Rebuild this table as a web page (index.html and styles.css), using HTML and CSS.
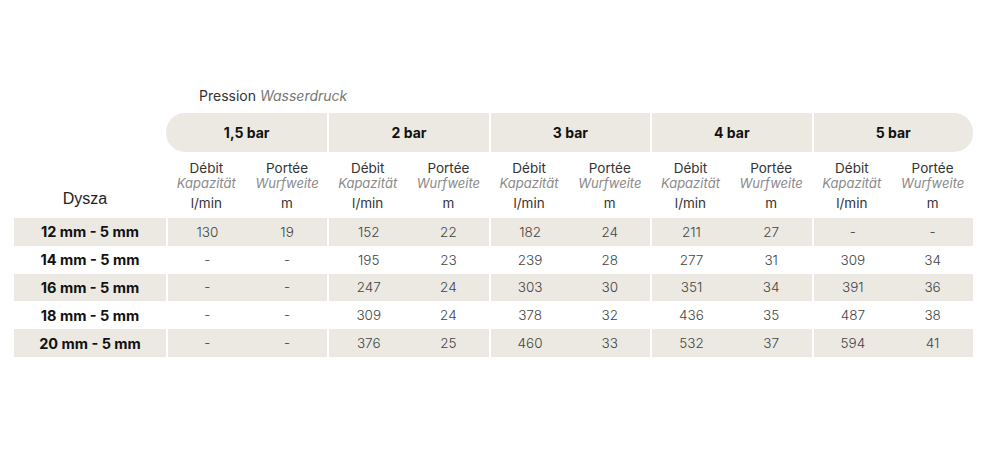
FILE: index.html
```html
<!DOCTYPE html>
<html lang="pl">
<head>
<meta charset="utf-8">
<title>Dysza</title>
<link rel="stylesheet" href="styles.css">
</head>
<body>
<div class="wrap">
  <div class="title">Pression <em>Wasserdruck</em></div>
  <table class="tbl">
    <colgroup>
      <col class="c-label">
      <col><col><col><col><col><col><col><col><col><col>
    </colgroup>
    <thead>
      <tr class="band">
        <th class="blank"></th>
        <th colspan="2" class="g first">1,5 bar</th>
        <th colspan="2" class="g">2 bar</th>
        <th colspan="2" class="g">3 bar</th>
        <th colspan="2" class="g">4 bar</th>
        <th colspan="2" class="g last">5 bar</th>
      </tr>
      <tr class="sub">
        <th class="dysza">Dysza</th>
        <th><span class="fr">Débit</span><span class="de">Kapazität</span><span class="unit">l/min</span></th>
        <th><span class="fr">Portée</span><span class="de">Wurfweite</span><span class="unit">m</span></th>
        <th><span class="fr">Débit</span><span class="de">Kapazität</span><span class="unit">l/min</span></th>
        <th><span class="fr">Portée</span><span class="de">Wurfweite</span><span class="unit">m</span></th>
        <th><span class="fr">Débit</span><span class="de">Kapazität</span><span class="unit">l/min</span></th>
        <th><span class="fr">Portée</span><span class="de">Wurfweite</span><span class="unit">m</span></th>
        <th><span class="fr">Débit</span><span class="de">Kapazität</span><span class="unit">l/min</span></th>
        <th><span class="fr">Portée</span><span class="de">Wurfweite</span><span class="unit">m</span></th>
        <th><span class="fr">Débit</span><span class="de">Kapazität</span><span class="unit">l/min</span></th>
        <th><span class="fr">Portée</span><span class="de">Wurfweite</span><span class="unit">m</span></th>
      </tr>
    </thead>
    <tbody>
      <tr class="odd">
        <th>12 mm - 5 mm</th>
        <td class="gs">130</td><td>19</td>
        <td class="gs">152</td><td>22</td>
        <td class="gs">182</td><td>24</td>
        <td class="gs">211</td><td>27</td>
        <td class="gs">-</td><td>-</td>
      </tr>
      <tr>
        <th>14 mm - 5 mm</th>
        <td class="gs">-</td><td>-</td>
        <td class="gs">195</td><td>23</td>
        <td class="gs">239</td><td>28</td>
        <td class="gs">277</td><td>31</td>
        <td class="gs">309</td><td>34</td>
      </tr>
      <tr class="odd">
        <th>16 mm - 5 mm</th>
        <td class="gs">-</td><td>-</td>
        <td class="gs">247</td><td>24</td>
        <td class="gs">303</td><td>30</td>
        <td class="gs">351</td><td>34</td>
        <td class="gs">391</td><td>36</td>
      </tr>
      <tr>
        <th>18 mm - 5 mm</th>
        <td class="gs">-</td><td>-</td>
        <td class="gs">309</td><td>24</td>
        <td class="gs">378</td><td>32</td>
        <td class="gs">436</td><td>35</td>
        <td class="gs">487</td><td>38</td>
      </tr>
      <tr class="odd">
        <th>20 mm - 5 mm</th>
        <td class="gs">-</td><td>-</td>
        <td class="gs">376</td><td>25</td>
        <td class="gs">460</td><td>33</td>
        <td class="gs">532</td><td>37</td>
        <td class="gs">594</td><td>41</td>
      </tr>
    </tbody>
  </table>
</div>
</body>
</html>
```
FILE: styles.css
```css
html, body {
  margin: 0;
  padding: 0;
  background: #ffffff;
}

body {
  font-family: "Inter", "Open Sans", sans-serif;
  color: #333;
}

.wrap {
  padding: 86px 0 0 14px;
}

.title {
  padding-left: 185px;
  font-size: 14px;
  line-height: 20px;
  color: #333;
  margin-bottom: 7px;
}

.title em {
  color: #777;
  font-style: italic;
}

.tbl {
  width: 959px;
  table-layout: fixed;
  border-collapse: separate;
  border-spacing: 0;
}

.c-label {
  width: 152px;
}

.tbl th,
.tbl td {
  padding: 0;
  text-align: center;
}

.band th {
  height: 39px;
  font-size: 14px;
  font-weight: 700;
  color: #111;
  background: #ebe9e2;
  border-left: 2px solid #fff;
}

.band th.blank {
  background: transparent;
  border-left: 0;
}

.band th.first {
  border-left: 0;
  border-radius: 19px 0 0 19px;
}

.band th.last {
  border-radius: 0 19px 19px 0;
}

.sub th {
  height: 66px;
  box-sizing: border-box;
  padding: 8px 0 7px;
  font-weight: 400;
  vertical-align: top;
}

.sub th span {
  display: block;
}

.sub .fr {
  font-size: 13.5px;
  line-height: 16px;
  color: #333;
}

.sub .de {
  font-size: 13px;
  line-height: 14px;
  font-style: italic;
  color: #8a8a8a;
}

.sub .unit {
  margin-top: 5px;
  font-size: 13.5px;
  line-height: 16px;
  color: #333;
}

.sub th.dysza {
  vertical-align: bottom;
  padding: 0 10px 9px 0;
  font-family: "Liberation Sans", Arial, sans-serif;
  font-size: 16px;
  line-height: 20px;
  color: #222;
}

tbody th,
tbody td {
  height: 27.8px;
  font-size: 13.5px;
}

tbody th {
  font-size: 14.5px;
  font-weight: 700;
  color: #111;
}

tbody td {
  font-weight: 300;
  color: #444;
}

tbody td.gs {
  border-left: 2px solid #fff;
}

tbody tr.odd th,
tbody tr.odd td {
  background: #ebe9e2;
}
```
